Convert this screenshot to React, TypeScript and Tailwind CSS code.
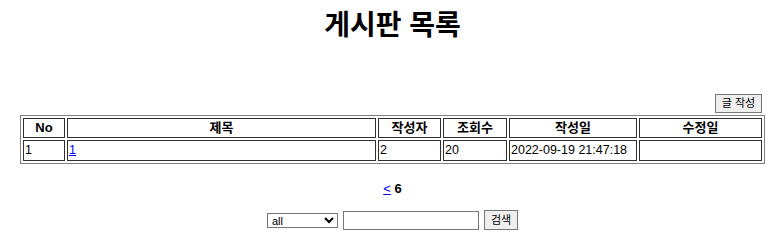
const font = "font-['Liberation_Sans','Noto_Sans_CJK_KR',sans-serif]";

const rows = [
  { no: "1", title: "1", writer: "2", hit: "20", created: "2022-09-19 21:47:18", updated: "" },
];

export default function App() {
  return (
    <div className={`${font} h-[240px] w-[774px] bg-white text-[13px] text-black`}>
      <h1 className="pl-[11px] pt-[7px] text-center text-[28px] font-bold leading-[37px]">게시판 목록</h1>

      <div className="mt-[50px] flex w-[765px] justify-end pr-[3px]">
        <button className="h-[19px] w-[47px] border border-[#767676] bg-[#efefef] text-[11px] leading-[15px]">
          글 작성
        </button>
      </div>

      <table className="ml-[20px] mt-[2px] w-[745px] table-fixed border-separate border-spacing-[2px] border border-[#808080]">
        <thead>
          <tr>
            <Th w="w-[42px]">No</Th>
            <Th w="w-[309px]">제목</Th>
            <Th w="w-[63px]">작성자</Th>
            <Th w="w-[64px]">조회수</Th>
            <Th w="w-[128px]">작성일</Th>
            <Th>수정일</Th>
          </tr>
        </thead>
        <tbody>
          {rows.map((r) => (
            <tr key={r.no}>
              <Td>{r.no}</Td>
              <Td>
                <a href="#" className="text-[#0000ee] underline">
                  {r.title}
                </a>
              </Td>
              <Td>{r.writer}</Td>
              <Td>{r.hit}</Td>
              <Td>{r.created}</Td>
              <Td>{r.updated}</Td>
            </tr>
          ))}
        </tbody>
      </table>

      <div className="mt-[17px] pl-[11px] text-center text-[13px] leading-[16px]">
        <a href="#" className="text-[#0000ee] underline">&lt;</a>{" "}
        <b>6</b>
      </div>

      <div className="mt-[13px] flex items-center gap-[5px] pl-[267px]">
        <select className="h-[15px] w-[71px] border border-[#767676] bg-white text-[11px] leading-[13px]">
          <option>all</option>
        </select>
        <input className="h-[19px] w-[136px] border border-[#767676]" />
        <button className="h-[20px] w-[34px] border border-[#767676] bg-[#efefef] text-[11px] leading-[15px]">
          검색
        </button>
      </div>
    </div>
  );
}

function Th({ children, w = "" }: { children: React.ReactNode; w?: string }) {
  return (
    <th className={`${w} h-[20px] border border-[#303030] p-px text-center text-[13px] font-bold leading-[16px]`}>
      {children}
    </th>
  );
}

function Td({ children }: { children: React.ReactNode }) {
  return (
    <td className="h-[21px] border border-[#303030] p-px text-left text-[12.5px] leading-[17px] whitespace-nowrap">
      {children}
    </td>
  );
}
